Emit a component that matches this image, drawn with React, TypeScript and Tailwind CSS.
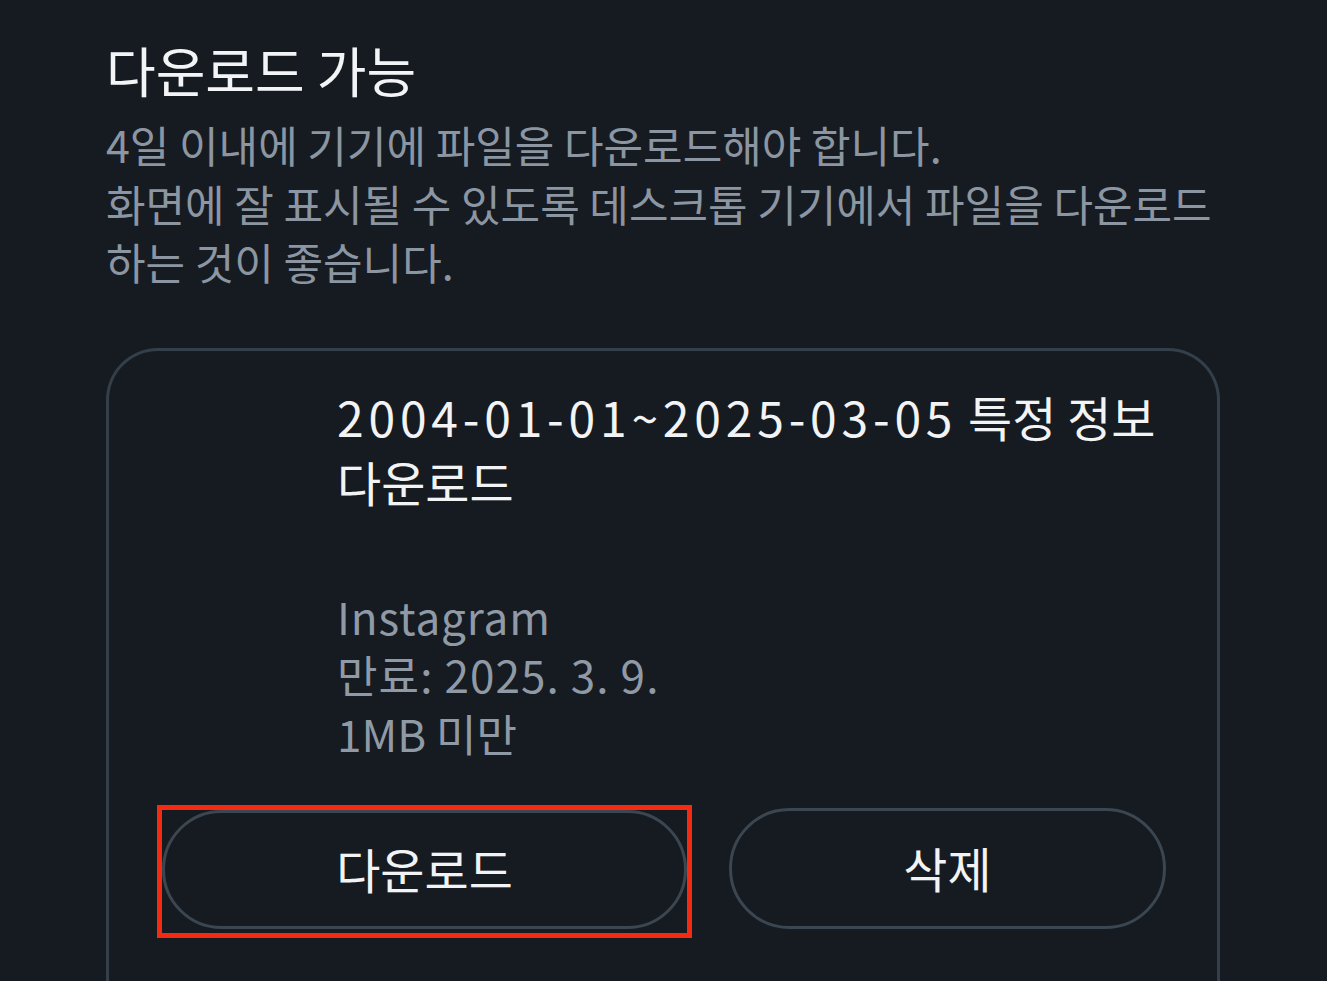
const font = { fontFamily: '"Noto Sans CJK KR", "Noto Sans", sans-serif' };

export default function App() {
  return (
    <div
      className="h-[981px] overflow-hidden bg-[#161b21] pl-[106px] pr-[100px] pt-[40px]"
      style={font}
    >
      <h1 className="text-[54px] leading-[60px] text-[#f2f4f6]">다운로드 가능</h1>
      <p className="mt-[15px] text-[43px] leading-[58.5px] text-[#8b96a2]">
        4일 이내에 기기에 파일을 다운로드해야 합니다.
        <br />
        화면에 잘 표시될 수 있도록 데스크톱 기기에서 파일을 다운로드
        <br />
        하는 것이 좋습니다.
      </p>

      <div className="mt-[57px] mr-[7px] h-[700px] rounded-t-[52px] border-[3px] border-b-0 border-[#343f4a] pt-[33px]">
        <div className="pl-[228px] pr-[20px]">
          <h2 className="text-[48px] leading-[65px] text-[#f1f3f5]">
            <span className="tracking-[0.1em]">2004-01-01~2025-03-05</span> 특정 정보
            <br />
            다운로드
          </h2>
          <div className="mt-[73px] text-[44px] leading-[58.5px] text-[#8f9aa6]">
            <div className="tracking-[0.02em]">Instagram</div>
            <div className="tracking-[0.025em]">만료: 2025. 3. 9.</div>
            <div>1MB 미만</div>
          </div>
        </div>

        <div className="mt-[48px] flex gap-[42px] pl-[53px]">
          <div className="relative">
            <button className="flex h-[119px] w-[525px] items-center justify-center rounded-full border-[3px] border-[#3b4651] pb-[4px] text-[48px] text-[#f1f3f5]">
              다운로드
            </button>
            <div className="pointer-events-none absolute -left-[5px] -right-[5px] -top-[5px] -bottom-[9px] border-[5px] border-[#f52a12]" />
          </div>
          <button className="-mt-[2px] flex h-[121px] w-[437px] items-center justify-center rounded-full border-[3px] border-[#3b4651] pb-[4px] text-[48px] text-[#f1f3f5]">
            삭제
          </button>
        </div>
      </div>
    </div>
  );
}
